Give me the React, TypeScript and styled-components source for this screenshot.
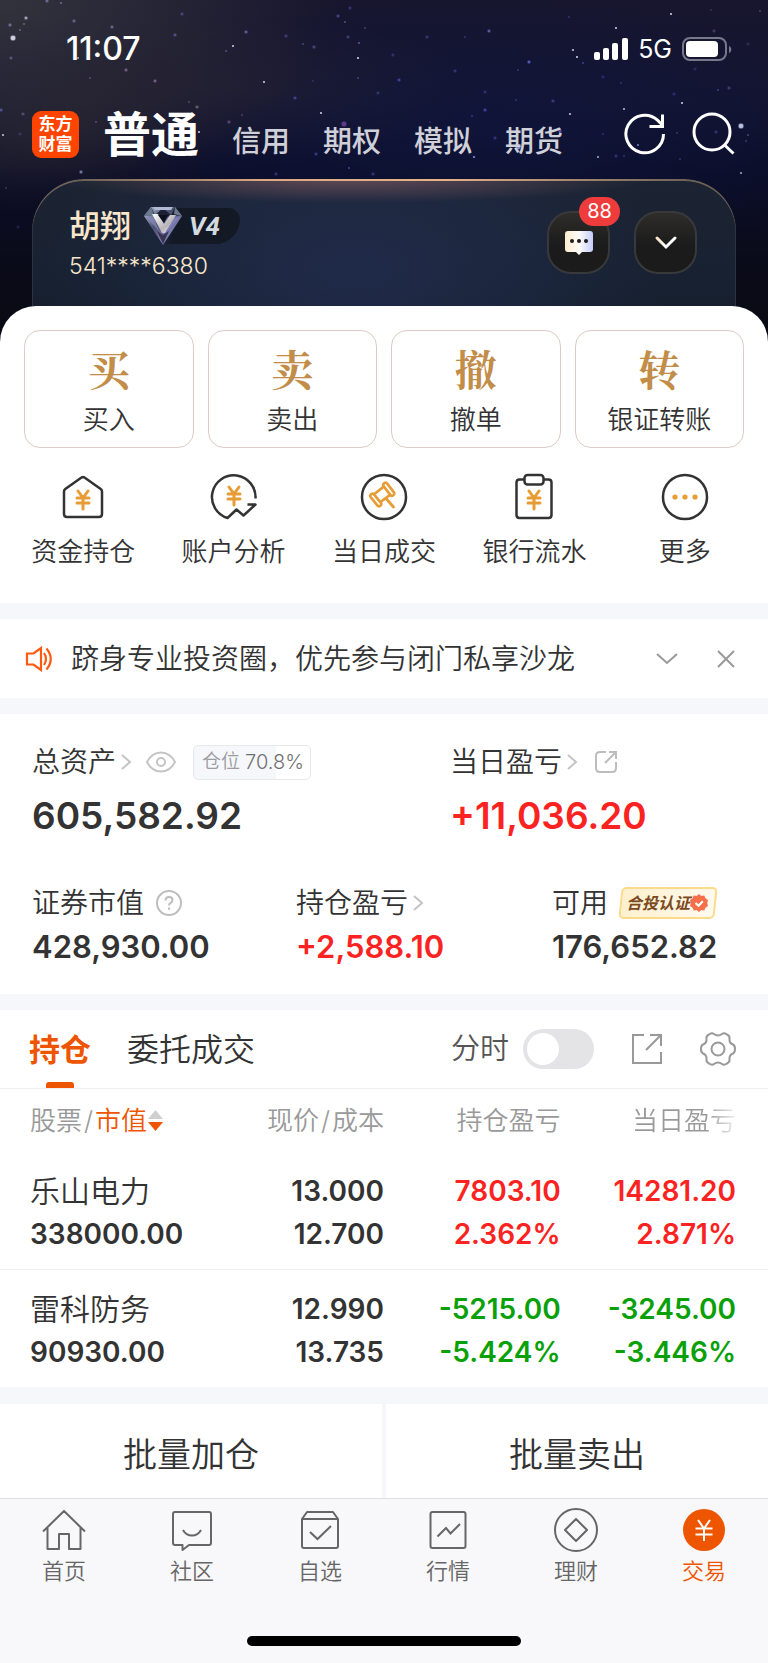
import React from "react";
import styled, { createGlobalStyle, css } from "styled-components";

const SANS = `Inter, "Noto Sans CJK SC", "Liberation Sans", sans-serif`;
const ORANGE = "#ee5500";
const RED = "#fb2222";
const GREEN = "#0aa00a";
const INK = "#333333";
const BAND = "#f6f7fa";

const Global = createGlobalStyle`
  *, *::before, *::after { box-sizing: border-box; }
  body { margin: 0; background: ${BAND}; font-family: ${SANS}; color: ${INK}; font-weight: 350; }
  button { border: 0; background: none; padding: 0; margin: 0; font: inherit; color: inherit; cursor: pointer; }
  a { color: inherit; text-decoration: none; }
  svg { display: block; flex: none; }
  h1, h2, p { margin: 0; }
`;

const Page = styled.div`
  display: flex;
  flex-direction: column;
  min-height: 100vh;
`;

/* ---------- header ---------- */

const Header = styled.header`
  position: relative;
  height: 344px;
  overflow: hidden;
  background:
    radial-gradient(ellipse 50% 40% at 62% 38%, rgba(15, 21, 60, 0.8), transparent),
    radial-gradient(ellipse 34% 20% at 30% 26%, rgba(44, 38, 46, 0.7), transparent),
    radial-gradient(ellipse 44% 56% at 0% 0%, rgba(58, 58, 64, 0.8), transparent),
    radial-gradient(ellipse 26% 22% at 6% 40%, rgba(36, 32, 44, 0.7), transparent),
    linear-gradient(180deg, #17162e 0%, #131430 30%, #0b0d28 50%, #0a0b18 78%, #080a12 100%);
`;

const Stars = styled.svg`
  position: absolute;
  inset: 0;
  width: 100%;
  height: 100%;
`;

const StatusBar = styled.div`
  position: relative;
  display: flex;
  justify-content: space-between;
  align-items: center;
  height: 98px;
  padding: 0 36px 0 66px;
  color: #fff;
`;

const Clock = styled.time`
  font-size: 32px;
  line-height: 36px;
  font-weight: 500;
`;

const Signals = styled.div`
  display: flex;
  align-items: center;
  gap: 10px;
  font-size: 25px;
  line-height: 30px;
  font-weight: 400;
`;

const TopNav = styled.nav`
  position: relative;
  display: flex;
  align-items: center;
  height: 72px;
  padding: 0 32px;
`;

const Logo = styled.a`
  width: 47px;
  height: 47px;
  border-radius: 9px;
  background: #ff4400;
  color: #fff;
  font-size: 17px;
  line-height: 20px;
  font-weight: 700;
  text-align: center;
  padding-top: 3px;
`;

const Markets = styled.div`
  display: flex;
  align-items: baseline;
  gap: 33px;
  flex: 1;
  margin-left: 24px;
  padding-top: 8px;
`;

const Market = styled.button<{ $active?: boolean }>`
  font-size: ${(p) => (p.$active ? 48 : 29)}px;
  line-height: 60px;
  font-weight: ${(p) => (p.$active ? 700 : 500)};
  color: ${(p) => (p.$active ? "#fff" : "#cfd0d8")};
`;

const NavTools = styled.div`
  display: flex;
  gap: 25px;
`;

const Account = styled.section`
  position: relative;
  display: flex;
  justify-content: space-between;
  margin: 9px 32px 0;
  padding: 24px 39px 0 37px;
  height: 180px;
  border-radius: 52px 52px 0 0;
  background:
    radial-gradient(ellipse 42% 24px at 45% 0, rgba(140, 96, 98, 0.6), transparent),
    radial-gradient(ellipse 44% 170px at 46% 90px, rgba(34, 46, 82, 0.75), transparent),
    linear-gradient(180deg, #1c2433 0%, #182131 60%, #161d2a 100%);
  box-shadow: inset 0 2px 0 0 #6d6257, inset 1px 0 0 #2c3442, inset -1px 0 0 #2c3442;

  &::before {
    content: "";
    position: absolute;
    left: 50px;
    right: 50px;
    top: 0;
    height: 2px;
    background: linear-gradient(90deg, #6d6257, #dca883 30%, #e6b28a 60%, #6d6257);
  }
`;

const Owner = styled.div`
  display: flex;
  flex-direction: column;
  color: #f9e7cb;
`;

const OwnerLine = styled.div`
  display: flex;
  align-items: center;
  gap: 12px;
  height: 46px;
`;

const OwnerName = styled.h1`
  font-size: 31px;
  line-height: 44px;
  font-weight: 500;
`;

const AccountNo = styled.p`
  font-size: 23px;
  line-height: 34px;
`;

const Level = styled.span`
  display: flex;
  align-items: center;
  gap: 6px;
  height: 36px;
  padding-right: 20px;
  border-radius: 8px 14px 30px 30px;
  background: linear-gradient(90deg, transparent 20%, #131a26 30%);
  font-size: 26px;
  line-height: 36px;
  font-weight: 700;
  font-style: italic;
  font-family: Roboto, sans-serif;
  color: #d3dae0;
`;

const AccountTools = styled.div`
  display: flex;
  gap: 24px;
  padding-top: 8px;
`;

const DarkButton = styled.button`
  position: relative;
  display: grid;
  place-items: center;
  width: 63px;
  height: 63px;
  border: 2px solid #39393b;
  border-radius: 24px;
  background: linear-gradient(180deg, #2f2d2b, #1b1b1b 55%);
`;

const Count = styled.span`
  position: absolute;
  left: 30px;
  top: -16px;
  width: 41px;
  border-radius: 15px;
  background: #ee3b3b;
  color: #fff;
  font-size: 20px;
  line-height: 29px;
  font-weight: 400;
  text-align: center;
`;

/* ---------- trading shortcuts ---------- */

const Sheet = styled.main`
  position: relative;
  margin-top: -38px;
  border-radius: 36px 36px 0 0;
  background: #fff;
`;

const TradeGrid = styled.div`
  display: grid;
  grid-template-columns: repeat(4, 1fr);
  gap: 14px;
  padding: 24px 24px 0;
`;

const TradeButton = styled.button`
  display: flex;
  flex-direction: column;
  align-items: center;
  gap: 6px;
  height: 118px;
  padding-top: 9px;
  border: 1px solid #dccbc6;
  border-radius: 16px;
  font-size: 26px;
  line-height: 36px;
`;

const Seal = styled.span`
  font-family: "Noto Serif CJK SC", "Source Han Serif SC", "Noto Sans CJK SC", serif;
  font-size: 42px;
  line-height: 56px;
  font-weight: 700;
  color: #c18d49;
`;

const Shortcuts = styled.nav`
  display: grid;
  grid-template-columns: repeat(5, 1fr);
  padding: 25px 8px 33px;
`;

const Shortcut = styled.a`
  display: flex;
  flex-direction: column;
  align-items: center;
  gap: 13px;
  font-size: 26px;
  line-height: 36px;
  white-space: nowrap;
`;

/* ---------- notice ---------- */

const Block = styled.section`
  margin-top: 16px;
  background: #fff;
`;

const Notice = styled(Block)`
  display: flex;
  align-items: center;
  height: 79px;
  padding: 0 30px 0 24px;
`;

const NoticeText = styled.p`
  flex: 1;
  margin-left: 17px;
  font-size: 28px;
  line-height: 40px;
`;

const NoticeTools = styled.div`
  display: flex;
  gap: 35px;
`;

/* ---------- assets ---------- */

const Assets = styled(Block)`
  padding: 28px 32px 23px;
`;

const AssetRow = styled.div<{ $columns: string; $gap?: number }>`
  display: grid;
  grid-template-columns: ${(p) => p.$columns};
  margin-bottom: ${(p) => p.$gap ?? 0}px;
`;

const AssetLabel = styled.div`
  display: flex;
  align-items: center;
  height: 40px;
  font-size: 28px;
  line-height: 40px;
  white-space: nowrap;
`;

const tones = { ink: INK, red: RED, green: GREEN };
type Tone = keyof typeof tones;

const AssetValue = styled.p<{ $large?: boolean; $tone?: Tone }>`
  font-weight: 600;
  font-size: ${(p) => (p.$large ? 37 : 31)}px;
  line-height: ${(p) => (p.$large ? 68 : 48)}px;
  color: ${(p) => tones[p.$tone ?? "ink"]};
`;

const IconButton = styled.button<{ $left?: number }>`
  display: grid;
  place-items: center;
  margin-left: ${(p) => p.$left ?? 0}px;
`;

const Ratio = styled.span`
  display: flex;
  align-items: center;
  gap: 5px;
  height: 35px;
  margin-left: 17px;
  padding: 0 6px 0 8px;
  border: 1px solid #e7e8ec;
  border-radius: 5px;
  background: linear-gradient(90deg, #f6f7fb 71%, #fff 71%);
  font-size: 20px;
  line-height: 30px;
  color: #6f6f73;
`;

const RatioName = styled.span`
  font-size: 19px;
  color: #9b9ba0;
`;

const Certified = styled.a`
  position: relative;
  display: flex;
  align-items: center;
  height: 32px;
  margin-left: 12px;
  padding: 0 8px 0 6px;
  font-size: 16px;
  line-height: 30px;
  font-weight: 700;
  font-style: italic;
  color: #7c4a22;

  &::before {
    content: "";
    position: absolute;
    inset: 0;
    border: 2px solid #fadb8a;
    border-radius: 5px;
    background: linear-gradient(100deg, #fef0cd, #fffaf0);
    transform: skewX(-6deg);
  }

  > * { position: relative; }
`;

/* ---------- holdings ---------- */

const TabRow = styled.div`
  display: flex;
  align-items: center;
  height: 79px;
  padding: 0 32px 0 29px;
  border-bottom: 1px solid #f0f0f2;
`;

const Tabs = styled.div`
  display: flex;
  flex: 1;
  align-self: stretch;
  gap: 36px;
`;

const Tab = styled.button<{ $active?: boolean }>`
  position: relative;
  padding-top: 2px;
  font-size: 32px;
  line-height: 44px;
  ${(p) =>
    p.$active &&
    css`
      font-size: 31px;
      font-weight: 700;
      color: ${ORANGE};
      &::after {
        content: "";
        position: absolute;
        left: 50%;
        bottom: 0;
        width: 28px;
        height: 6px;
        margin-left: -14px;
        border-radius: 3px 3px 0 0;
        background: ${ORANGE};
      }
    `}
`;

const SwitchLabel = styled.label`
  display: flex;
  align-items: center;
  gap: 14px;
  font-size: 29px;
  line-height: 40px;
  color: #555;
`;

const Switch = styled.input`
  appearance: none;
  width: 71px;
  height: 40px;
  margin: 0;
  padding: 4px;
  border-radius: 20px;
  background: #e4e4e7;
  &::before {
    content: "";
    display: block;
    width: 32px;
    height: 32px;
    border-radius: 16px;
    background: #fff;
  }
  &:checked { background: ${ORANGE}; }
  &:checked::before { margin-left: auto; }
`;

const Table = styled.table`
  width: 100%;
  table-layout: fixed;
  border-collapse: collapse;
`;

const Head = styled.th<{ $fade?: boolean }>`
  height: 62px;
  padding: 2px 0 0;
  font-size: 26px;
  line-height: 36px;
  font-weight: 350;
  color: #999;
  text-align: right;
  white-space: nowrap;
  &:first-child { text-align: left; padding-left: 30px; }
  &:last-child { padding-right: 32px; }
  ${(p) =>
    p.$fade &&
    css`
      background: linear-gradient(90deg, #999 70%, #fff 87%);
      background-clip: text;
      color: transparent;
    `}
`;

const SortButton = styled.button`
  display: inline-flex;
  align-items: center;
  gap: 1px;
  color: ${ORANGE};
`;

const Slash = styled.span`
  margin: 0 2px;
`;

const Holding = styled.tr`
  & + & { border-top: 1px solid #f0f0f2; }
`;

const Cell = styled.td<{ $tone?: Tone }>`
  height: 118px;
  padding: 6px 0 0;
  font-size: 28px;
  line-height: 43px;
  font-weight: 600;
  text-align: right;
  white-space: nowrap;
  color: ${(p) => tones[p.$tone ?? "ink"]};
  &:first-child { text-align: left; padding-left: 30px; }
  &:last-child { padding-right: 32px; }
`;

const Line = styled.div`
  height: 43px;
`;

const StockName = styled(Line)`
  font-size: 30px;
  font-weight: 350;
`;

const BatchRow = styled.div`
  display: grid;
  grid-template-columns: 1fr 1fr;
  gap: 4px;
  margin-top: 17px;
`;

const BatchButton = styled.button`
  height: 94px;
  background: #fff;
  font-size: 34px;
  line-height: 48px;
  padding-top: 7px;
`;

/* ---------- bottom bar ---------- */

const TabBar = styled.footer`
  display: flex;
  flex: 1;
  flex-direction: column;
  justify-content: space-between;
  align-items: center;
  padding: 9px 0 17px;
  border-top: 1px solid #dddee2;
  background: #f8f8fb;
`;

const TabBarItems = styled.nav`
  display: grid;
  grid-template-columns: repeat(6, 1fr);
  width: 100%;
  margin-bottom: 50px;
`;

const TabBarItem = styled.a<{ $active?: boolean }>`
  display: flex;
  flex-direction: column;
  align-items: center;
  gap: 4px;
  font-size: 22px;
  line-height: 30px;
  color: ${(p) => (p.$active ? ORANGE : "#666")};
`;

const HomeIndicator = styled.div`
  width: 274px;
  height: 10px;
  border-radius: 5px;
  background: #000;
`;

/* ---------- drawings ---------- */

const starList: [number, number, number, string][] = [
  [13, 38, 3, "#e9ecff"], [26, 18, 2, "#b9bad6"], [10, 25, 2, "#7a78a0"], [20, 30, 1, "#6c6a90"], [24, 24, 1, "#6c6a90"],
  [11, 58, 2, "#605d86"], [74, 21, 2, "#6f6c98"], [112, 27, 2, "#726f9c"], [47, 1, 2, "#77749e"], [61, 3, 1, "#77749e"],
  [182, 14, 2, "#4d4a80"], [175, 35, 2, "#5c5894"], [246, 32, 2, "#6c64ae"], [286, 36, 2, "#46427a"], [233, 46, 1, "#e4e6ff"],
  [226, 51, 1, "#57538a"], [314, 47, 2, "#504b94"], [303, 44, 1, "#4d4a80"], [338, 16, 2, "#4c4690"], [350, 8, 2, "#3c3880"],
  [345, 22, 1, "#57538a"], [348, 37, 2, "#46427a"], [359, 43, 1, "#6560a8"], [358, 58, 1, "#f2f3ff"], [365, 28, 1, "#46427a"],
  [78, 58, 1, "#aeb0d8"], [126, 70, 2, "#7b6992"], [155, 81, 2, "#7b6798"], [90, 78, 1, "#55507a"], [264, 82, 1, "#e8eaff"],
  [313, 81, 1, "#37346e"], [358, 78, 1, "#4a4690"], [378, 93, 2, "#3b377c"], [295, 98, 2, "#4a479a"], [197, 107, 2, "#7b6470"],
  [189, 102, 1, "#5a4c68"], [1, 110, 2, "#5a58a0"], [23, 114, 2, "#55527c"], [3, 135, 1, "#dcdcf2"], [20, 134, 2, "#3c3a68"],
  [96, 122, 1, "#55527c"], [321, 113, 1, "#e6e8ff"], [344, 124, 3, "#6c409c"], [348, 133, 2, "#46428a"], [229, 122, 2, "#6c4a7c"],
  [242, 115, 1, "#4a4476"], [199, 132, 1, "#e8e8f8"], [275, 153, 2, "#6a78d0"], [316, 154, 2, "#38408c"], [276, 174, 2, "#373680"],
  [81, 172, 2, "#7d88b4"], [18, 227, 2, "#24244c"], [6, 188, 1, "#3c3a60"], [373, 174, 2, "#3a3880"], [349, 168, 1, "#4a48a0"],
  [427, 37, 2, "#3c387c"], [489, 31, 2, "#6a60b0"], [465, 37, 1, "#3c387c"], [393, 55, 2, "#3a3474"], [399, 80, 2, "#4a44a8"],
  [455, 71, 2, "#3a3688"], [529, 62, 2, "#5a64c8"], [518, 70, 1, "#3a3688"], [569, 17, 1, "#3c387c"], [573, 50, 1, "#dfe2ff"],
  [577, 57, 1, "#f0f1ff"], [583, 63, 1, "#4640a0"], [616, 28, 1, "#e6e8f6"], [671, 14, 1, "#f2f2f8"], [711, 10, 1, "#38345c"],
  [714, 31, 2, "#4a3c68"], [748, 44, 2, "#342f5c"], [760, 11, 1, "#4c4876"], [695, 69, 2, "#302c68"], [603, 77, 2, "#302c78"],
  [621, 83, 1, "#38348a"], [674, 94, 2, "#34317c"], [682, 103, 1, "#e6e8ff"], [718, 90, 1, "#4a4488"], [729, 88, 2, "#463f84"],
  [624, 109, 1, "#c2caff"], [570, 114, 1, "#d8dcff"], [485, 92, 2, "#38347c"], [516, 100, 1, "#3a368a"], [553, 101, 2, "#443c90"],
  [485, 110, 2, "#4a44b0"], [472, 116, 1, "#3c3898"], [430, 122, 1, "#302c78"], [495, 138, 2, "#3c3888"], [560, 131, 2, "#5a64c0"],
  [518, 147, 3, "#98a4e8"], [474, 157, 1, "#8ca8ff"], [598, 157, 1, "#aebcff"], [638, 145, 1, "#7c88e0"], [603, 134, 1, "#38348a"],
  [741, 126, 3, "#d6dcff"], [716, 132, 2, "#38367c"], [748, 135, 1, "#4c4888"], [746, 141, 1, "#403c78"], [741, 173, 1, "#b4b8d8"],
  [616, 156, 2, "#38347c"], [624, 156, 1, "#3a368a"], [677, 133, 1, "#3c386c"], [680, 159, 1, "#3a3670"],
];

const StarField = () => (
  <Stars viewBox="0 0 768 344" preserveAspectRatio="xMidYMin slice" aria-hidden="true">
    {starList.map(([x, y, r, fill], i) => (
      <g key={i} fill={fill} opacity={0.85}>
        {r > 1 && <circle cx={x} cy={y} r={r} opacity={0.35} />}
        <circle cx={x} cy={y} r={r > 1 ? r - 0.7 : 1.1} />
      </g>
    ))}
  </Stars>
);

type IconProps = React.SVGProps<SVGSVGElement> & { w: number; h?: number };
const Icon = ({ w, h = w, children, ...rest }: IconProps) => (
  <svg
    width={w}
    height={h}
    viewBox={`0 0 ${w} ${h}`}
    fill="none"
    stroke="currentColor"
    strokeWidth={2}
    aria-hidden="true"
    {...rest}
  >
    {children}
  </svg>
);

const SignalIcon = () => (
  <Icon w={34} h={24} stroke="none" fill="#fff">
    <rect x={0} y={15} width={6} height={8} rx={2} />
    <rect x={9} y={11} width={6} height={12} rx={2} />
    <rect x={18} y={6} width={6} height={17} rx={2} />
    <rect x={28} y={1} width={6} height={22} rx={2} />
  </Icon>
);

const BatteryIcon = () => (
  <Icon w={50} h={24}>
    <rect x={1} y={1} width={43} height={22} rx={7} stroke="#77788c" />
    <rect x={4} y={4} width={32} height={16} rx={4} fill="#fff" stroke="none" />
    <path d="M47 9v7c3-1 3-6 0-7z" fill="#77788c" stroke="none" />
  </Icon>
);

const RefreshIcon = () => (
  <Icon w={44} stroke="#fff" strokeWidth={3}>
    <path d="M40.500 22a18.800 18.800 0 1 1-6-13.800l5 5" />
    <path d="M39.500 2.500v12h-13" />
  </Icon>
);

const SearchIcon = () => (
  <Icon w={44} stroke="#fff" strokeWidth={3}>
    <circle cx={20} cy={20} r={18} />
    <path d="M32 32.500l9.500 9" />
  </Icon>
);

const DiamondIcon = () => (
  <Icon w={40} h={40} stroke="none">
    <defs>
      <linearGradient id="gem" x1="0" y1="0" x2="1" y2="1">
        <stop offset="0" stopColor="#b4c4d8" />
        <stop offset="0.400" stopColor="#4b5070" />
        <stop offset="0.700" stopColor="#7f80b8" />
        <stop offset="1" stopColor="#2b2d45" />
      </linearGradient>
      <linearGradient id="gemV" x1="0" y1="0" x2="1" y2="1">
        <stop offset="0" stopColor="#ffffff" />
        <stop offset="0.600" stopColor="#b9b4b8" />
        <stop offset="1" stopColor="#f2f0f5" />
      </linearGradient>
    </defs>
    <path d="M8 1h24l7 9-19 29L1 10z" fill="url(#gem)" />
    <path d="M8 1l4 8L1 10zM32 1l-4 8 11 1zM12 9l8-7 8 7-8 4z" fill="#1d2036" />
    <path d="M10 1h20l-2 3H12z" fill="#b4bad4" />
    <path d="M3 11l8 1 5 13zM37 11l-8 1-5 13z" fill="#8788c0" opacity={0.700} />
    <path d="M14 25l6 13 6-13-6 4z" fill="#3a3650" />
    <path d="M9 8h6l6 10 6-9h6L22 27h-3z" fill="url(#gemV)" />
    <path d="M15 9h10l-4 8z" fill="#0e1020" />
    <path d="M8 1L1 10l10-1zM32 1l7 9-8-2z" fill="#bcd3e6" opacity={0.500} />
  </Icon>
);

const MessageIcon = () => (
  <Icon w={28} h={26} stroke="none">
    <defs>
      <linearGradient id="bubble" x1="0" y1="0" x2="1" y2="0">
        <stop offset="0" stopColor="#fdebcf" />
        <stop offset="0.500" stopColor="#fffdf8" />
        <stop offset="1" stopColor="#c3ccfb" />
      </linearGradient>
    </defs>
    <path d="M3 1h22a3 3 0 0 1 3 3v15a3 3 0 0 1-3 3h-8l-3 3-3-3H3a3 3 0 0 1-3-3V4a3 3 0 0 1 3-3z" fill="url(#bubble)" />
    <g fill="#1b1b1b">
      <circle cx={7} cy={11} r={2} />
      <circle cx={14} cy={11} r={2} />
      <circle cx={21} cy={11} r={2} />
    </g>
  </Icon>
);

const ExpandIcon = () => (
  <Icon w={24} h={16} strokeWidth={3} strokeLinecap="round">
    <defs>
      <linearGradient id="expand" x1="0" y1="0" x2="1" y2="0">
        <stop offset="0" stopColor="#fbe3c4" />
        <stop offset="0.500" stopColor="#fff" />
        <stop offset="1" stopColor="#fff" />
      </linearGradient>
    </defs>
    <path d="M3 3l9 9 9-9" stroke="url(#expand)" />
  </Icon>
);

const AMBER = "#e89c35";
const Yen = ({ x, y }: { x: number; y: number }) => (
  <path
    d={`M${x - 5} ${y - 8}l5 7 5-7M${x} ${y - 1}v11M${x - 6} ${y - 1}h12M${x - 6} ${y + 4}h12`}
    stroke={AMBER}
    strokeWidth={3}
    strokeLinecap="round"
    strokeLinejoin="round"
  />
);

const FundsIcon = () => (
  <Icon w={48} strokeWidth={2.5}>
    <path d="M5 18.500Q5 17 6.300 16L22.500 4.600Q24 3.600 25.500 4.600L41.700 16Q43 17 43 18.500V41Q43 44 40 44H8Q5 44 5 41z" />
    <Yen x={24} y={26} />
  </Icon>
);

const AnalysisIcon = () => (
  <Icon w={48} strokeWidth={2.5}>
    <path d="M45.500 25.500A21.800 21.800 0 1 0 17.500 45l9-8.500 7 6 12-11h-8" strokeLinejoin="round" />
    <Yen x={24} y={22} />
  </Icon>
);

const DealsIcon = () => (
  <Icon w={48} strokeWidth={2.5}>
    <circle cx={24} cy={24} r={22} />
    <g stroke={AMBER} strokeLinecap="round">
      <path d="M15 20.500l9.500-7.500M20.500 29l10-7.500M26 25.500l7.500 8.500" strokeWidth={2.8} />
      <path d="M12.500 23l6.500 8M25.500 12l6.500 8.500" strokeWidth={7} />
      <path d="M12.500 23l6.500 8M25.500 12l6.500 8.500" stroke="#fff" strokeWidth={1.8} />
    </g>
  </Icon>
);

const StatementIcon = () => (
  <Icon w={48} strokeWidth={2.5}>
    <path d="M14.500 6.500H9.500Q6.500 6.500 6.500 9.500V42Q6.500 45 9.500 45h29Q41.500 45 41.500 42V9.500Q41.500 6.500 38.500 6.500H33.500" />
    <rect x={14.500} y={2} width={19} height={9.500} rx={3} />
    <Yen x={24} y={26} />
  </Icon>
);

const MoreIcon = () => (
  <Icon w={48} strokeWidth={2.5}>
    <circle cx={24} cy={24} r={22} />
    <g fill={AMBER} stroke="none">
      <circle cx={14} cy={24} r={2.600} />
      <circle cx={24} cy={24} r={2.600} />
      <circle cx={34} cy={24} r={2.600} />
    </g>
  </Icon>
);

const SpeakerIcon = () => (
  <Icon w={30} h={26} stroke="#ff5a0f" strokeWidth={2.2}>
    <path d="M3 7.500h6.500L17 2v22l-7.500-5.500H3z" />
    <path d="M20 7q4 6 0 12M22.500 2.500q8.500 10.500 0 21" />
  </Icon>
);

const DownIcon = () => (
  <Icon w={24} stroke="#999">
    <path d="M2 7l10 9 10-9" />
  </Icon>
);

const CloseIcon = () => (
  <Icon w={24} stroke="#999">
    <path d="M4 4l16 16M20 4L4 20" />
  </Icon>
);

const RightIcon = () => (
  <Icon w={12} h={18} stroke="#c4c4c4">
    <path d="M2 2l8 7-8 7" />
  </Icon>
);

const EyeIcon = () => (
  <Icon w={30} h={22} stroke="#c4c4c4">
    <path d="M1 11Q6 1.500 15 1.500T29 11Q24 20.500 15 20.500T1 11z" />
    <circle cx={15} cy={11} r={4} />
  </Icon>
);

const ShareSmallIcon = () => (
  <Icon w={24} stroke="#bdbdbd">
    <path d="M12 2H6Q2 2 2 6v12q0 4 4 4h12q4 0 4-4v-6M11 13L21.500 2.500M15 2h7v7" />
  </Icon>
);

const HelpIcon = () => (
  <Icon w={26} stroke="#bdbdbd">
    <circle cx={13} cy={13} r={12} />
    <path d="M9.500 10.500q0-3.500 3.500-3.500t3.500 3q0 1.800-1.800 2.800t-1.700 2.700M13 17.500v2.200" />
  </Icon>
);

const SealIcon = () => (
  <Icon w={18} stroke="none">
    <path
      d="M9 0l2.300 1.900 3-.4 1.100 2.800L18 6l-.8 3 .8 3-2.600 1.700-1.100 2.800-3-.4L9 18l-2.300-1.900-3 .4-1.100-2.800L0 12l.8-3L0 6l2.600-1.700 1.100-2.800 3 .4z"
      fill="#f5704a"
    />
    <path d="M5.500 9l3 2.800 4.300-4.600" stroke="#fff" strokeWidth={2} />
  </Icon>
);

const ExportIcon = () => (
  <Icon w={32} stroke="#999">
    <path d="M13 2H2v28h28V19M15 17L29.500 2.500M19 2h11v11" />
  </Icon>
);

const GearIcon = () => (
  <Icon w={36} stroke="#999">
    <path
      d="M9 3.500Q12 1.500 14 3q4 3 8 0 2-1.500 5 .5 3 1.500 2.500 4-.5 4.500 3.500 6 2 1 2 4.500t-2 4.500q-4 1.500-3.500 6 .5 2.500-2.500 4-3 2-5 .5-4-3-8 0-2 1.500-5-.5-3-1.500-2.500-4Q7 24 3 22.500q-2-1-2-4.500T3 13.500Q7 12 6.500 7.500 6 5 9 3.500z"
      strokeLinejoin="round"
    />
    <circle cx={18} cy={18} r={6.500} />
  </Icon>
);

const SortIcon = () => (
  <Icon w={15} h={22} stroke="none">
    <path d="M7.500 0L15 9H0z" fill="#cfcfcf" />
    <path d="M7.500 21L15 12H0z" fill={ORANGE} />
  </Icon>
);

const HomeIcon = () => (
  <Icon w={44}>
    <path d="M1 23.500L22 3l21 20.500M5.500 19.500V41H17V26h10v15h11.500V19.500" strokeLinejoin="round" />
  </Icon>
);

const CommunityIcon = () => (
  <Icon w={44}>
    <path d="M5 4h34q2 0 2 2v29q0 2-2 2H19l-6.500 5v-5H5q-2 0-2-2V6q0-2 2-2z" strokeLinejoin="round" />
    <path d="M13 22q3 5.500 9 5.500t9-5.500" />
  </Icon>
);

const WatchIcon = () => (
  <Icon w={44}>
    <path d="M4 11l5-7h26l5 7v27q0 2-2 2H6q-2 0-2-2zM4 11h36" strokeLinejoin="round" />
    <path d="M12 24l7.500 7L33 18" />
  </Icon>
);

const QuotesIcon = () => (
  <Icon w={44}>
    <rect x={4.500} y={4} width={35} height={36} rx={2} />
    <path d="M11.500 28.500l8.500-8.500 4.500 5.500 9.500-9.500" />
  </Icon>
);

const WealthIcon = () => (
  <Icon w={44}>
    <circle cx={22} cy={22} r={21} />
    <path d="M22 11l11 11-11 11-11-11z" strokeLinejoin="round" />
  </Icon>
);

const TradeIcon = () => (
  <Icon w={44} stroke="#fff">
    <circle cx={22} cy={22} r={21} fill={ORANGE} stroke="none" />
    <path d="M16 12l6 8.500 6-8.500M22 20.500V33M13.500 20.500h17M13.500 26.500h17" />
  </Icon>
);

/* ---------- data ---------- */

const trades = [["买", "买入"], ["卖", "卖出"], ["撤", "撤单"], ["转", "银证转账"]];

const shortcuts = [
  { label: "资金持仓", icon: <FundsIcon /> },
  { label: "账户分析", icon: <AnalysisIcon /> },
  { label: "当日成交", icon: <DealsIcon /> },
  { label: "银行流水", icon: <StatementIcon /> },
  { label: "更多", icon: <MoreIcon /> },
];

const holdings: { name: string; value: string; price: string; cost: string; total: string[]; day: string[]; tone: Tone }[] = [
  { name: "乐山电力", value: "338000.00", price: "13.000", cost: "12.700", total: ["7803.10", "2.362%"], day: ["14281.20", "2.871%"], tone: "red" },
  { name: "雷科防务", value: "90930.00", price: "12.990", cost: "13.735", total: ["-5215.00", "-5.424%"], day: ["-3245.00", "-3.446%"], tone: "green" },
];

const tabBar = [
  { label: "首页", icon: <HomeIcon /> },
  { label: "社区", icon: <CommunityIcon /> },
  { label: "自选", icon: <WatchIcon /> },
  { label: "行情", icon: <QuotesIcon /> },
  { label: "理财", icon: <WealthIcon /> },
  { label: "交易", icon: <TradeIcon />, active: true },
];

export default function App() {
  return (
    <Page>
      <Global />
      <Header>
        <StarField />
        <StatusBar>
          <Clock>11:07</Clock>
          <Signals>
            <SignalIcon />
            5G
            <BatteryIcon />
          </Signals>
        </StatusBar>
        <TopNav>
          <Logo href="#">东方<br />财富</Logo>
          <Markets>
            <Market $active>普通</Market>
            {["信用", "期权", "模拟", "期货"].map((m) => (
              <Market key={m}>{m}</Market>
            ))}
          </Markets>
          <NavTools>
            <IconButton aria-label="刷新"><RefreshIcon /></IconButton>
            <IconButton aria-label="搜索"><SearchIcon /></IconButton>
          </NavTools>
        </TopNav>
        <Account>
          <Owner>
            <OwnerLine>
              <OwnerName>胡翔</OwnerName>
              <Level><DiamondIcon />V4</Level>
            </OwnerLine>
            <AccountNo>541****6380</AccountNo>
          </Owner>
          <AccountTools>
            <DarkButton aria-label="消息">
              <MessageIcon />
              <Count>88</Count>
            </DarkButton>
            <DarkButton aria-label="展开账户"><ExpandIcon /></DarkButton>
          </AccountTools>
        </Account>
      </Header>

      <Sheet>
        <TradeGrid>
          {trades.map(([seal, label]) => (
            <TradeButton key={label}>
              <Seal>{seal}</Seal>
              {label}
            </TradeButton>
          ))}
        </TradeGrid>
        <Shortcuts>
          {shortcuts.map((s) => (
            <Shortcut key={s.label} href="#">
              {s.icon}
              {s.label}
            </Shortcut>
          ))}
        </Shortcuts>
      </Sheet>

      <Notice>
        <SpeakerIcon />
        <NoticeText>跻身专业投资圈，优先参与闭门私享沙龙</NoticeText>
        <NoticeTools>
          <IconButton aria-label="展开"><DownIcon /></IconButton>
          <IconButton aria-label="关闭"><CloseIcon /></IconButton>
        </NoticeTools>
      </Notice>

      <Assets>
        <AssetRow $columns="418fr 286fr" $gap={33}>
          <div>
            <AssetLabel>
              总资产
              <IconButton $left={4} aria-label="总资产详情"><RightIcon /></IconButton>
              <IconButton $left={14} aria-label="隐藏金额"><EyeIcon /></IconButton>
              <Ratio><RatioName>仓位</RatioName>70.8%</Ratio>
            </AssetLabel>
            <AssetValue $large>605,582.92</AssetValue>
          </div>
          <div>
            <AssetLabel>
              当日盈亏
              <IconButton $left={4} aria-label="当日盈亏详情"><RightIcon /></IconButton>
              <IconButton $left={16} aria-label="分享"><ShareSmallIcon /></IconButton>
            </AssetLabel>
            <AssetValue $large $tone="red">+11,036.20</AssetValue>
          </div>
        </AssetRow>
        <AssetRow $columns="264fr 256fr 184fr">
          <div>
            <AssetLabel>
              证券市值
              <IconButton $left={12} aria-label="说明"><HelpIcon /></IconButton>
            </AssetLabel>
            <AssetValue>428,930.00</AssetValue>
          </div>
          <div>
            <AssetLabel>
              持仓盈亏
              <IconButton $left={4} aria-label="持仓盈亏详情"><RightIcon /></IconButton>
            </AssetLabel>
            <AssetValue $tone="red">+2,588.10</AssetValue>
          </div>
          <div>
            <AssetLabel>
              可用
              <Certified href="#"><span>合投认证</span><SealIcon /></Certified>
            </AssetLabel>
            <AssetValue>176,652.82</AssetValue>
          </div>
        </AssetRow>
      </Assets>

      <Block>
        <TabRow>
          <Tabs>
            <Tab $active>持仓</Tab>
            <Tab>委托成交</Tab>
          </Tabs>
          <SwitchLabel>
            分时
            <Switch type="checkbox" role="switch" />
          </SwitchLabel>
          <IconButton $left={37} aria-label="导出"><ExportIcon /></IconButton>
          <IconButton $left={37} aria-label="设置"><GearIcon /></IconButton>
        </TabRow>
        <Table>
          <colgroup>
            <col width="27%" />
            <col width="23%" />
            <col width="23%" />
            <col width="27%" />
          </colgroup>
          <thead>
            <tr>
              <Head>
                股票<Slash>/</Slash>
                <SortButton>市值<SortIcon /></SortButton>
              </Head>
              <Head>现价<Slash>/</Slash>成本</Head>
              <Head>持仓盈亏</Head>
              <Head $fade>当日盈亏</Head>
            </tr>
          </thead>
          <tbody>
            {holdings.map((h) => (
              <Holding key={h.name}>
                <Cell><StockName>{h.name}</StockName><Line>{h.value}</Line></Cell>
                <Cell><Line>{h.price}</Line><Line>{h.cost}</Line></Cell>
                <Cell $tone={h.tone}>{h.total.map((t) => <Line key={t}>{t}</Line>)}</Cell>
                <Cell $tone={h.tone}>{h.day.map((t) => <Line key={t}>{t}</Line>)}</Cell>
              </Holding>
            ))}
          </tbody>
        </Table>
      </Block>

      <BatchRow>
        <BatchButton>批量加仓</BatchButton>
        <BatchButton>批量卖出</BatchButton>
      </BatchRow>

      <TabBar>
        <TabBarItems>
          {tabBar.map((t) => (
            <TabBarItem key={t.label} href="#" $active={t.active}>
              {t.icon}
              {t.label}
            </TabBarItem>
          ))}
        </TabBarItems>
        <HomeIndicator />
      </TabBar>
    </Page>
  );
}
